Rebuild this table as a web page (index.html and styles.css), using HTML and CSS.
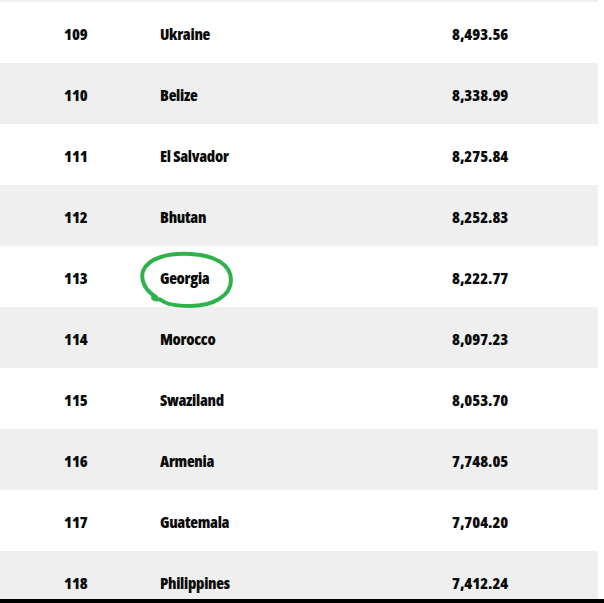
FILE: index.html
```html
<!DOCTYPE html>
<html>
<head>
<meta charset="utf-8">
<link rel="stylesheet" href="styles.css">
</head>
<body>
<div class="frame">
  <div class="table">
    <div class="edge"></div>
    <div class="row"><span class="rank">109</span><span class="country">Ukraine</span><span class="value">8,493.56</span></div>
    <div class="row alt"><span class="rank">110</span><span class="country">Belize</span><span class="value">8,338.99</span></div>
    <div class="row"><span class="rank">111</span><span class="country">El Salvador</span><span class="value">8,275.84</span></div>
    <div class="row alt"><span class="rank">112</span><span class="country">Bhutan</span><span class="value">8,252.83</span></div>
    <div class="row"><span class="rank">113</span><span class="country">Georgia</span><span class="value">8,222.77</span></div>
    <div class="row alt"><span class="rank">114</span><span class="country">Morocco</span><span class="value">8,097.23</span></div>
    <div class="row"><span class="rank">115</span><span class="country">Swaziland</span><span class="value">8,053.70</span></div>
    <div class="row alt"><span class="rank">116</span><span class="country">Armenia</span><span class="value">7,748.05</span></div>
    <div class="row"><span class="rank">117</span><span class="country">Guatemala</span><span class="value">7,704.20</span></div>
    <div class="row alt"><span class="rank">118</span><span class="country">Philippines</span><span class="value">7,412.24</span></div>
  </div>
  <div class="bottom-bar"></div>
  <svg class="circle" width="604" height="603" viewBox="0 0 604 603">
    <path d="M156,297 C146,291 140,281 143,271 C148,258 168,253 190,254 C214,255 231,264 231,280 C231,296 213,306 190,306 C176,306 166,304 161,300 C158,298 155,301 153,298" fill="none" stroke="#2fb24b" stroke-width="4" stroke-linecap="round" stroke-linejoin="round"/>
  </svg>
</div>
</body>
</html>
```
FILE: styles.css
```css
html, body {
  margin: 0;
  padding: 0;
  background: #ffffff;
}

.frame {
  position: relative;
  width: 604px;
  height: 603px;
  overflow: hidden;
}

.table {
  width: 598px;
  height: 599px;
  overflow: hidden;
  font-family: "Open Sans", "Liberation Sans", sans-serif;
  font-weight: 800;
  font-stretch: 75%;
  font-size: 16px;
  color: #0a0a0a;
}

.edge {
  height: 2px;
  background: #efefef;
}

.row {
  display: grid;
  grid-template-columns: 96px 292px 1fr;
  align-items: center;
  height: 61px;
  padding-left: 64px;
  padding-top: 2px;
  box-sizing: border-box;
  background: #ffffff;
}

.row.alt {
  background: #efefef;
}

.country {
  letter-spacing: -0.3px;
}

.bottom-bar {
  height: 4px;
  background: #000000;
}

.circle {
  position: absolute;
  left: 0;
  top: 0;
  pointer-events: none;
}
```
